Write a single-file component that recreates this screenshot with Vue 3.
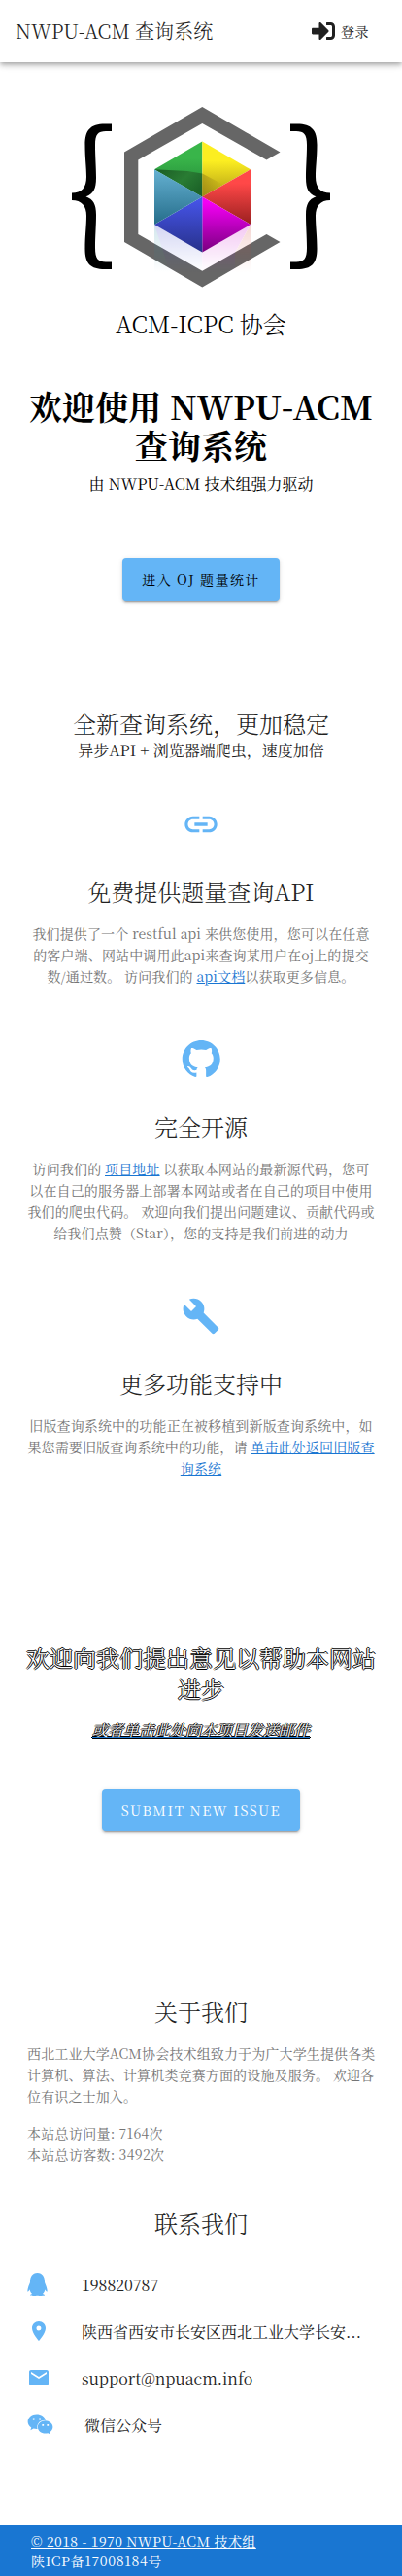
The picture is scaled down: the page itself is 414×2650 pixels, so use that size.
<script setup>
const features = [
  {
    icon: 'link',
    title: '免费提供题量查询API',
    before: '我们提供了一个 restful api 来供您使用，您可以在任意的客户端、网站中调用此api来查询某用户在oj上的提交数/通过数。 访问我们的 ',
    link: 'api文档',
    after: '以获取更多信息。',
  },
  {
    icon: 'github',
    title: '完全开源',
    before: '访问我们的 ',
    link: '项目地址',
    after: ' 以获取本网站的最新源代码，您可以在自己的服务器上部署本网站或者在自己的项目中使用我们的爬虫代码。 欢迎向我们提出问题建议、贡献代码或给我们点赞（Star），您的支持是我们前进的动力',
  },
  {
    icon: 'wrench',
    title: '更多功能支持中',
    before: '旧版查询系统中的功能正在被移植到新版查询系统中，如果您需要旧版查询系统中的功能，请 ',
    link: '单击此处返回旧版查询系统',
    after: '',
  },
]
const paths = {
  link: 'M3.9 12c0-1.71 1.39-3.1 3.1-3.1h4V7H7c-2.76 0-5 2.24-5 5s2.24 5 5 5h4v-1.9H7c-1.71 0-3.1-1.39-3.1-3.1zM8 13h8v-2H8v2zm9-6h-4v1.9h4c1.71 0 3.1 1.39 3.1 3.1s-1.39 3.1-3.1 3.1h-4V17h4c2.76 0 5-2.24 5-5s-2.24-5-5-5z',
  wrench: 'M22.7 19l-9.1-9.1c.9-2.3.4-5-1.5-6.9-2-2-5-2.4-7.4-1.3L9 6 6 9 1.6 4.7C.4 7.1.9 10.1 2.9 12.1c1.9 1.9 4.6 2.4 6.9 1.5l9.1 9.1c.4.4 1 .4 1.4 0l2.3-2.3c.5-.4.5-1.1.1-1.4z',
  github: 'M8 0C3.58 0 0 3.58 0 8c0 3.54 2.29 6.53 5.47 7.59.4.07.55-.17.55-.38 0-.19-.01-.82-.01-1.49-2.01.37-2.53-.49-2.69-.94-.09-.23-.48-.94-.82-1.13-.28-.15-.68-.52-.01-.53.63-.01 1.08.58 1.23.82.72 1.21 1.87.87 2.33.66.07-.52.28-.87.51-1.07-1.78-.2-3.64-.89-3.64-3.95 0-.87.31-1.59.82-2.15-.08-.2-.36-1.02.08-2.12 0 0 .67-.21 2.2.82.64-.18 1.32-.27 2-.27s1.36.09 2 .27c1.53-1.04 2.2-.82 2.2-.82.44 1.1.16 1.92.08 2.12.51.56.82 1.27.82 2.15 0 3.07-1.87 3.75-3.65 3.95.29.25.54.73.54 1.48 0 1.07-.01 1.93-.01 2.2 0 .21.15.46.55.38A8.01 8.01 0 0 0 16 8c0-4.42-3.58-8-8-8z',
}
</script>

<template>
  <div class="page">
    <header class="bar">
      <div class="brand">NWPU-ACM 查询系统</div>
      <div class="login">
        <svg width="24" height="24" viewBox="0 0 512 512" fill="#212121"><path d="M416 448h-84c-6.600 0-12-5.400-12-12v-40c0-6.600 5.400-12 12-12h84c17.700 0 32-14.300 32-32V160c0-17.700-14.300-32-32-32h-84c-6.600 0-12-5.400-12-12V76c0-6.600 5.400-12 12-12h84c53 0 96 43 96 96v192c0 53-43 96-96 96zm-47-209L201 71c-15-15-41-4.500-41 17v96H24c-13.300 0-24 10.700-24 24v96c0 13.300 10.700 24 24 24h136v96c0 21.500 26 32 41 17l168-168c9.300-9.400 9.300-24.600 0-34z" /></svg>
        <span>登录</span>
      </div>
    </header>

    <section class="hero">
      <svg class="logo" width="268" height="186" viewBox="73 110 268 186">
        <defs>
          <linearGradient id="gr" x1="0" y1="0" x2="0" y2="1"><stop offset=".3" stop-color="#39b54a" /><stop offset="1" stop-color="#1f8034" /></linearGradient>
          <linearGradient id="gd" x1="0" y1="0" x2="1" y2=".6"><stop offset="0" stop-color="#1b5a24" /><stop offset=".6" stop-color="#297c33" /><stop offset="1" stop-color="#1d6529" /></linearGradient>
          <linearGradient id="ye" x1="0" y1="0" x2="0" y2="1"><stop offset=".35" stop-color="#fcee21" /><stop offset="1" stop-color="#b09c15" /></linearGradient>
          <linearGradient id="yd" x1="0" y1="0" x2="1" y2="0"><stop offset="0" stop-color="#8c7813" stop-opacity=".5" /><stop offset="1" stop-color="#8c7813" stop-opacity="0" /></linearGradient>
          <linearGradient id="re" x1="0" y1="0" x2="0" y2="1"><stop offset=".25" stop-color="#ff4848" /><stop offset="1" stop-color="#9a1f1f" /></linearGradient>
          <linearGradient id="ma" x1="0" y1="0" x2="0" y2="1"><stop offset=".1" stop-color="#f500f5" /><stop offset="1" stop-color="#79007f" /></linearGradient>
          <linearGradient id="bl" x1="0" y1="0" x2="0" y2="1"><stop offset=".05" stop-color="#4654e8" /><stop offset="1" stop-color="#27318a" /></linearGradient>
          <linearGradient id="te" x1="0" y1="0" x2="0" y2="1"><stop offset="0" stop-color="#65b1d2" /><stop offset="1" stop-color="#256d8a" /></linearGradient>
          <linearGradient id="fade" x1="0" y1="0" x2="0" y2="1"><stop offset="0" stop-color="#fff" stop-opacity=".22" /><stop offset="1" stop-color="#fff" stop-opacity="0" /></linearGradient>
          <mask id="mk"><rect x="159" y="230" width="99" height="50" fill="url(#fade)" /></mask>
        </defs>
        <path fill="#666" d="M208.300 110L288.500 156.500L274.500 164.500L208.300 127L142.300 164.500V241L208.300 278.700L274.500 241L288.500 249L208.300 295.500L128 249V156.500Z" />
        <g mask="url(#mk)">
          <path fill="#2d8fa8" d="M159 231L175 259V280H159Z" />
          <path fill="#3540c8" d="M159 231L208.300 259V280H175Z" />
          <path fill="#c800c8" d="M208.300 259L258 231L242 260V280H208.300Z" />
          <path fill="#d04030" d="M258 231V280H242V260Z" />
        </g>
        <path fill="url(#gr)" d="M208.300 145.500V202.500L159 174.300Z" />
        <path fill="url(#gd)" d="M159 174.300L193 176L208.300 178.500V202.500Z" />
        <path fill="url(#ye)" d="M208.300 145.500L258 174.300L208.300 202.500Z" />
        <path fill="url(#yd)" d="M208.300 178.500L230 190L208.300 202.500Z" />
        <path fill="url(#re)" d="M258 174.300V231L208.300 202.500Z" />
        <path fill="url(#ma)" d="M258 231L208.300 259.500V202.500Z" />
        <path fill="url(#bl)" d="M208.300 259.500L159 231L208.300 202.500Z" />
        <path fill="url(#te)" d="M159 231V174.300L208.300 202.500Z" />
        <path id="brace" d="M115 127.500H108C93 127.500 87.500 134 87.500 149C87.500 163 89 171 89 182C89 193 84 198.500 74 198.500V206C84 206 89 212 89 222C89 233 87.500 242 87.500 256C87.500 271 93 277 108 277H115V269.500H109C101 269.500 98 266 98 255C98 242 99 233 99 221C99 210 96 205 88.500 202.300C96 199.500 99 194.500 99 183C99 171 98 162 98 149C98 138 101 135 109 135H115Z" />
        <use href="#brace" transform="translate(414 0) scale(-1 1)" />
      </svg>
      <h3 class="headline club">ACM-ICPC 协会</h3>
      <h1>欢迎使用 NWPU-ACM<br>查询系统</h1>
      <p class="sub dark">由 NWPU-ACM 技术组强力驱动</p>
      <button class="btn enter">进入 OJ 题量统计</button>
    </section>

    <section class="intro">
      <h2 class="headline">全新查询系统，更加稳定</h2>
      <p class="sub">异步API + 浏览器端爬虫，速度加倍</p>
    </section>

    <section v-for="f in features" :key="f.icon" class="feature" :class="f.icon">
      <svg v-if="f.icon === 'github'" class="ficon" width="40" height="40" viewBox="-.3 0 16.400 16.400"><path :d="paths.github" /></svg>
      <svg v-else class="ficon" width="40" height="40" viewBox="0 0 24 24"><path :d="paths[f.icon]" /></svg>
      <h2 class="headline">{{ f.title }}</h2>
      <p class="copy">{{ f.before }}<a>{{ f.link }}</a>{{ f.after }}</p>
    </section>

    <section class="feedback">
      <h2 class="headline outlined">欢迎向我们提出意见以帮助本网站进步</h2>
      <a class="mail"><em class="outlined">或者单击此处向本项目发送邮件</em></a>
      <button class="btn submit">SUBMIT NEW ISSUE</button>
    </section>

    <section class="about">
      <h2 class="headline">关于我们</h2>
      <p class="copy">西北工业大学ACM协会技术组致力于为广大学生提供各类计算机、算法、计算机类竞赛方面的设施及服务。 欢迎各位有识之士加入。</p>
      <p class="copy stats">本站总访问量: 7164次<br>本站总访客数: 3492次</p>
    </section>

    <section class="contact">
      <h2 class="headline">联系我们</h2>
      <ul>
        <li>
          <svg width="21" height="24" viewBox="0 0 448 512"><path d="M433.754 420.445c-11.526 1.393-44.860-52.741-44.860-52.741 0 31.345-16.136 72.247-51.051 101.786 16.842 5.192 54.843 19.167 45.803 34.421-7.316 12.343-125.510 7.881-159.632 4.037-34.122 3.844-152.316 8.306-159.632-4.037-9.045-15.250 28.918-29.214 45.783-34.415-34.920-29.539-51.059-70.445-51.059-101.792 0 0-33.334 54.134-44.859 52.741-5.370-.650-12.424-29.644 9.347-99.704 10.261-33.024 21.995-60.478 40.144-105.779C60.683 98.063 108.982.006 224 0c113.737.006 163.156 96.133 160.264 214.963 18.118 45.223 29.912 72.850 40.144 105.778 21.768 70.060 14.716 99.053 9.346 99.704z" /></svg>
          <span>198820787</span>
        </li>
        <li>
          <svg class="std" width="24" height="24" viewBox="0 0 24 24"><path d="M12 2C8.130 2 5 5.130 5 9c0 5.250 7 13 7 13s7-7.750 7-13c0-3.870-3.130-7-7-7zm0 9.500a2.500 2.500 0 1 1 0-5 2.500 2.500 0 0 1 0 5z" /></svg>
          <span>陕西省西安市长安区西北工业大学长安<i class="dots">…</i></span>
        </li>
        <li>
          <svg class="std" width="24" height="24" viewBox="0 0 24 24"><path d="M20 4H4c-1.100 0-1.990.9-1.990 2L2 18c0 1.100.9 2 2 2h16c1.100 0 2-.9 2-2V6c0-1.100-.9-2-2-2zm0 4l-8 5-8-5V6l8 5 8-5v2z" /></svg>
          <span>support@npuacm.info</span>
        </li>
        <li class="wechat">
          <svg width="27" height="24" viewBox="0 0 576 512"><path d="M385.200 167.600c6.400 0 12.600.3 18.800 1.100C387.400 90.300 303.300 32 207.700 32 100.500 32 13 104.800 13 197.400c0 53.400 29.300 97.500 77.900 131.600l-19.300 58.600 68-34.100c24.400 4.800 43.800 9.700 68.200 9.700 6.200 0 12.100-.3 18.300-.8-4-12.900-6.200-26.600-6.200-40.800-.1-84.900 72.900-154 165.300-154zm-104.500-52.900c14.500 0 24.200 9.700 24.200 24.400 0 14.500-9.700 24.200-24.200 24.200-14.800 0-29.300-9.700-29.300-24.200.1-14.700 14.600-24.400 29.300-24.400zm-136.400 48.600c-14.500 0-29.300-9.700-29.300-24.200 0-14.800 14.800-24.400 29.300-24.400 14.800 0 24.400 9.700 24.400 24.400 0 14.600-9.600 24.200-24.400 24.200zM563 319.400c0-77.900-77.900-141.300-165.400-141.300-92.700 0-165.400 63.400-165.400 141.300S305 460.700 397.600 460.700c19.300 0 38.900-5.100 58.600-9.900l53.400 29.300-14.800-48.600C534 402.100 563 363.200 563 319.400zm-219.100-24.500c-9.700 0-19.300-9.700-19.300-19.600 0-9.700 9.700-19.300 19.300-19.300 14.800 0 24.400 9.700 24.400 19.300 0 10-9.700 19.600-24.400 19.600zm107.100 0c-9.700 0-19.300-9.700-19.300-19.600 0-9.700 9.700-19.300 19.300-19.300 14.500 0 24.400 9.700 24.400 19.300 0 10-9.900 19.600-24.400 19.600z" /></svg>
          <span>微信公众号</span>
        </li>
      </ul>
    </section>

    <footer>
      <a>© 2018 - 1970 NWPU-ACM 技术组</a>
      <span>陕ICP备17008184号</span>
    </footer>
  </div>
</template>

<style>
body { background: #fff; }
</style>
<style scoped>
.page { width: 414px; height: 2650px; display: flex; flex-direction: column; color: #212121; font: 400 14px/22px "Noto Serif CJK SC", "Noto Serif SC", "Liberation Serif", "Noto Sans CJK SC", serif; overflow: hidden; }
h1, h2, h3, p, ul { margin: 0; padding: 0; font-weight: inherit; }
.bar { height: 64px; box-sizing: border-box; flex: none; display: flex; align-items: center; justify-content: space-between; padding: 0 34px 0 16px; box-shadow: 0 2px 4px -1px rgba(0,0,0,.2), 0 4px 5px rgba(0,0,0,.14), 0 1px 10px rgba(0,0,0,.12); }
.brand { font-size: 20px; line-height: 30px; font-weight: 300; letter-spacing: .05px; }
.login { display: flex; align-items: center; gap: 6px; letter-spacing: .5px; }
.hero { height: 656px; flex: none; display: flex; flex-direction: column; align-items: center; }
.logo { margin-top: 46px; flex: none; }
.headline { font-size: 24px; line-height: 32px; font-weight: 300; text-align: center; }
.club { margin-top: 21px; color: #000; }
h1 { margin-top: 49px; font-size: 34px; line-height: 40px; font-weight: 700; letter-spacing: .12px; text-align: center; color: #000; white-space: nowrap; }
.sub { font-size: 16px; line-height: 24px; text-align: center; }
.dark { margin-top: 8px; color: #000; }
.btn { display: block; height: 44px; padding: 0; border: 0; border-radius: 4px; background: #64b5f6; color: #000; font: inherit; letter-spacing: 1.4px; white-space: nowrap; box-shadow: 0 3px 1px -2px rgba(0,0,0,.2), 0 2px 2px rgba(0,0,0,.14), 0 1px 5px rgba(0,0,0,.12); }
.enter { width: 162px; margin-top: 64px; }
.intro { height: 108px; box-sizing: border-box; flex: none; padding-top: 8px; }
.feature { flex: none; text-align: center; padding: 0 28px; }
.ficon { display: block; margin: 0 auto; fill: #64b5f6; }
.feature .headline { margin-top: 33px; }
.link { height: 242px; }
.github { height: 264px; }
.wrench { height: 355px; }
.copy { margin-top: 16px; color: #757575; letter-spacing: .01em; }
.copy a { color: #1976d2; text-decoration: underline; }
.about .copy { margin-right: -3px; }
.about .stats { letter-spacing: .3px; }
.feedback { height: 364px; flex: none; display: flex; flex-direction: column; align-items: center; padding: 0 20px; }
.outlined { color: #fff; text-shadow: 1px 0 #000, -1px 0 #000, 0 1px #000, 0 -1px #000; }
.mail { margin-top: 15px; color: #1976d2; font-size: 16px; line-height: 24px; text-decoration: underline; }
.submit { width: 204px; margin-top: 48px; color: #fff; letter-spacing: 1.58px; }
.about { height: 218px; flex: none; padding: 0 28px; }
.contact { height: 327px; flex: none; padding: 0 28px; }
ul { list-style: none; margin-top: 24px; }
li { height: 48px; display: flex; align-items: center; font-size: 16px; line-height: 24px; fill: #64b5f6; }
li svg { margin: 0 35px 2px 0; flex: none; }
li .std { margin-right: 32px; }
li span { white-space: nowrap; }
.dots { font: normal 16px/1 "Liberation Serif", serif; }
.wechat svg { margin-right: 32px; }
footer { height: 52px; box-sizing: border-box; flex: none; padding: 6px 32px; display: flex; flex-direction: column; align-items: flex-start; background: #1976d2; color: #fff; line-height: 20px; letter-spacing: .65px; }
footer a { text-decoration: underline; letter-spacing: .43px; }
</style>
